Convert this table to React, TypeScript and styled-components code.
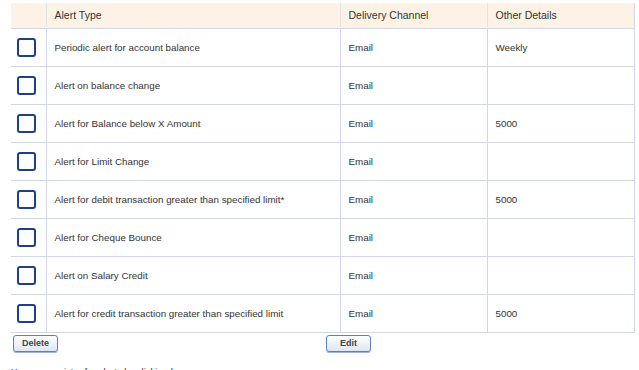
import React from "react";
import styled, { createGlobalStyle } from "styled-components";

const GlobalStyle = createGlobalStyle`
body {
    margin: 0;
    background: #ffffff;
    font-family: "Liberation Sans", Arial, sans-serif;
}
`

const Page = styled.div`
padding: 3px 5px 0 11px;
color: #333333;
`

const Table = styled.table`
width: 623px;
border-collapse: collapse;
table-layout: fixed;

th, td {
    box-sizing: border-box;
}
th {
    background: #fcf3e6;
    font-weight: normal;
    font-size: 10.5px;
    text-align: left;
    height: 25px;
    padding: 0 0 0 8px;
    border-left: 1px solid #e4e2e2;
}
th:nth-child(1) { width: 35px; border-left: none; }
th:nth-child(2) { width: 294px; }
th:nth-child(3) { width: 147px; }
th:nth-child(4) { width: 147px; }
th:last-child, td:last-child {
    border-right: 1px solid #d3d6e6;
}
td {
    height: 38px;
    font-size: 9.8px;
    padding: 0 0 0 8px;
    border-top: 1px solid #d3d6e6;
    border-left: 1px solid #d3d6e6;
}
td:first-child {
    border-left: none;
    padding: 0 0 0 6px;
}
tr:last-child td {
    border-bottom: 1px solid #d3d6e6;
}
`

const Check = styled.span`
display: block;
width: 15px;
height: 15px;
border: 2px solid #1d3f8c;
border-radius: 3px;
background: #ffffff;
`

const Actions = styled.div`
display: flex;
padding: 2px 0 0 2px;
gap: 268px;
`

const Button = styled.button`
width: 45px;
height: 17px;
padding: 0;
font-family: "Liberation Sans", Arial, sans-serif;
font-size: 9px;
font-weight: bold;
color: #444444;
border: 1px solid #5c82bd;
border-radius: 3px;
background: linear-gradient(#ffffff, #dde6f3);
box-shadow: 0 1px 0 #9fb4d6;
`

const Note = styled.div`
margin-top: 14px;
font-size: 9.5px;
color: #333333;
`

const alerts = [
    { type: "Periodic alert for account balance", channel: "Email", details: "Weekly" },
    { type: "Alert on balance change", channel: "Email", details: "" },
    { type: "Alert for Balance below X Amount", channel: "Email", details: "5000" },
    { type: "Alert for Limit Change", channel: "Email", details: "" },
    { type: "Alert for debit transaction greater than specified limit*", channel: "Email", details: "5000" },
    { type: "Alert for Cheque Bounce", channel: "Email", details: "" },
    { type: "Alert on Salary Credit", channel: "Email", details: "" },
    { type: "Alert for credit transaction greater than specified limit", channel: "Email", details: "5000" },
]

const App: React.FC = () => {
    return (
        <Page>
            <GlobalStyle />
            <Table>
                <thead>
                    <tr>
                        <th></th>
                        <th>Alert Type</th>
                        <th>Delivery Channel</th>
                        <th>Other Details</th>
                    </tr>
                </thead>
                <tbody>
                    {alerts.map((a) => (
                        <tr key={a.type}>
                            <td><Check /></td>
                            <td>{a.type}</td>
                            <td>{a.channel}</td>
                            <td>{a.details}</td>
                        </tr>
                    ))}
                </tbody>
            </Table>
            <Actions>
                <Button>Delete</Button>
                <Button>Edit</Button>
            </Actions>
            <Note>You may register for alerts by clicking here</Note>
        </Page>
    )
}

export default App
